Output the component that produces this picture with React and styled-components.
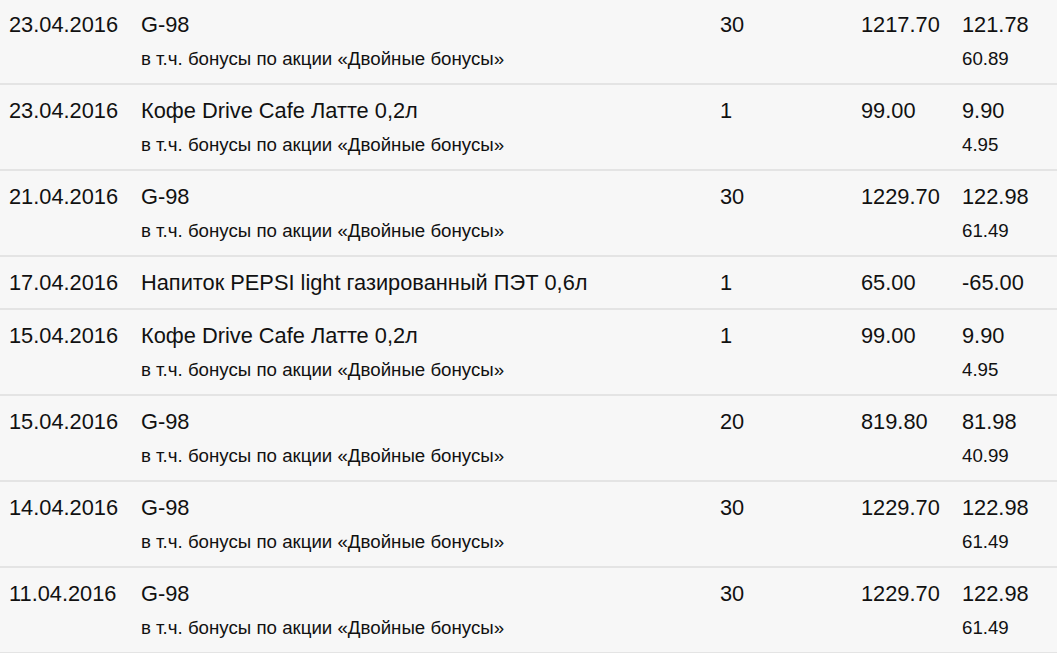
import React from "react";
import styled, { createGlobalStyle } from "styled-components";

const GlobalStyle = createGlobalStyle`
  html, body {
    margin: 0;
    padding: 0;
    background: #f7f7f7;
  }

  body {
    font-family: "Liberation Sans", Arial, sans-serif;
    color: #111;
  }
`;

const Table = styled.div`
  width: 100%;
  background: #f7f7f7;
`;

const Row = styled.div`
  display: grid;
  grid-template-columns: 132px 579px 141px 101px 1fr;
  padding: 10px 0 10px 9px;
  border-bottom: 2px solid #e4e4e4;

  &:not(:first-child) {
    padding-top: 11px;
  }
`;

const Cell = styled.div`
  display: flex;
  flex-direction: column;
`;

const Main = styled.span`
  font-size: 21.8px;
  line-height: 30px;
  white-space: nowrap;
`;

const Sub = styled.span`
  margin-top: 6px;
  margin-bottom: 1px;
  font-size: 18.7px;
  line-height: 26px;
  white-space: nowrap;
`;

const BONUS_NOTE = "в т.ч. бонусы по акции «Двойные бонусы»";

const rows = [
  { date: "23.04.2016", name: "G-98", qty: "30", price: "1217.70", bonus: "121.78", extra: "60.89" },
  { date: "23.04.2016", name: "Кофе Drive Cafe Латте 0,2л", qty: "1", price: "99.00", bonus: "9.90", extra: "4.95" },
  { date: "21.04.2016", name: "G-98", qty: "30", price: "1229.70", bonus: "122.98", extra: "61.49" },
  { date: "17.04.2016", name: "Напиток PEPSI light газированный ПЭТ 0,6л", qty: "1", price: "65.00", bonus: "-65.00" },
  { date: "15.04.2016", name: "Кофе Drive Cafe Латте 0,2л", qty: "1", price: "99.00", bonus: "9.90", extra: "4.95" },
  { date: "15.04.2016", name: "G-98", qty: "20", price: "819.80", bonus: "81.98", extra: "40.99" },
  { date: "14.04.2016", name: "G-98", qty: "30", price: "1229.70", bonus: "122.98", extra: "61.49" },
  { date: "11.04.2016", name: "G-98", qty: "30", price: "1229.70", bonus: "122.98", extra: "61.49" },
];

const App = () => (
  <>
    <GlobalStyle />
    <Table>
      {rows.map((r, i) => (
        <Row key={i}>
          <Cell>
            <Main>{r.date}</Main>
          </Cell>
          <Cell>
            <Main>{r.name}</Main>
            {r.extra && <Sub>{BONUS_NOTE}</Sub>}
          </Cell>
          <Cell>
            <Main>{r.qty}</Main>
          </Cell>
          <Cell>
            <Main>{r.price}</Main>
          </Cell>
          <Cell>
            <Main>{r.bonus}</Main>
            {r.extra && <Sub>{r.extra}</Sub>}
          </Cell>
        </Row>
      ))}
    </Table>
  </>
);

export default App;
